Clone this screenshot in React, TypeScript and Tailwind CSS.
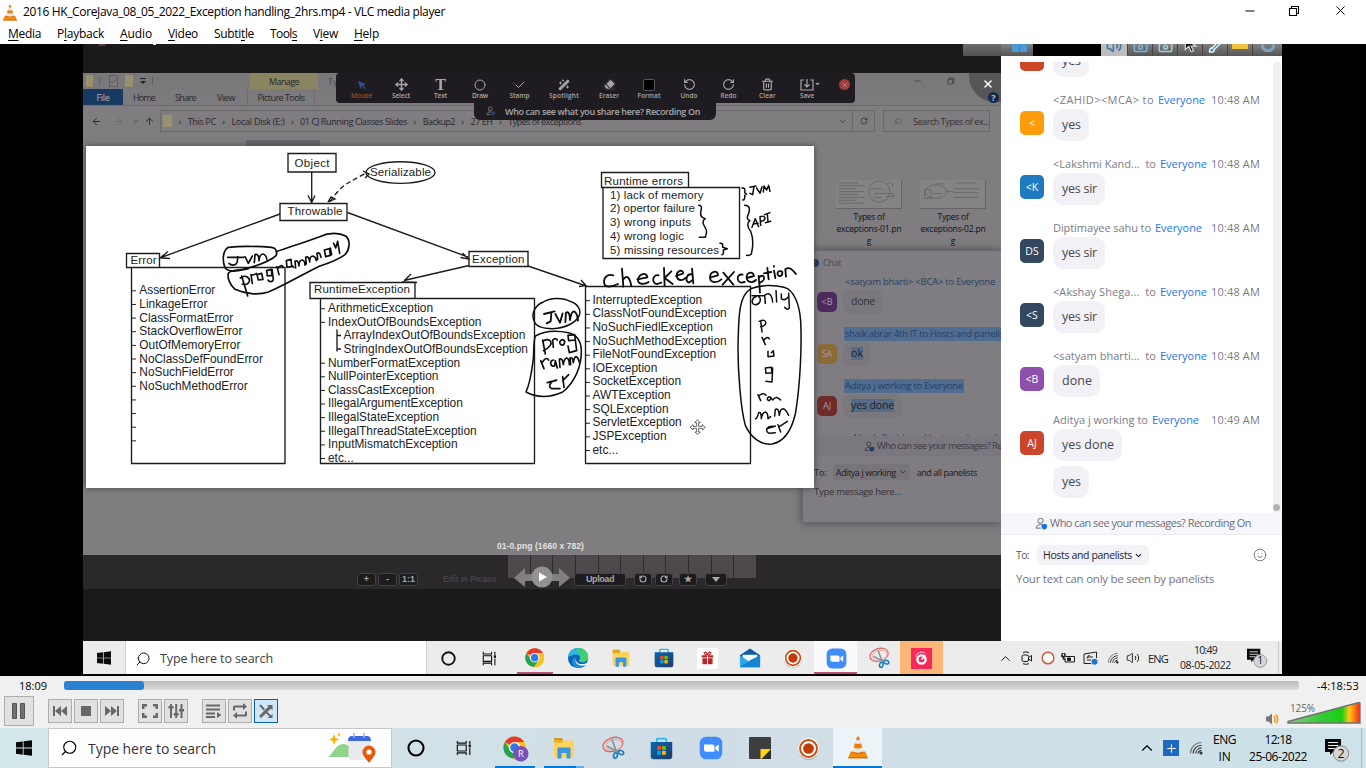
import React, { useLayoutEffect, useRef, useState } from "react";
import {
  Brush, Check, ChevronDown, ChevronUp, Circle, ArrowLeft, ArrowRight, ArrowUp, Eraser, Minus, Move,
  Plus, RotateCcw, RotateCw, Search, Smile, Trash2, Volume2, WandSparkles, X, Camera,
} from "lucide-react";

/* A single-line label whose letter spacing is adjusted so that it fills its slot. */
function Fit({ w, className = "", children }: { w: number; className?: string; children: React.ReactNode }) {
  const inner = useRef<HTMLSpanElement>(null);
  const [spacing, setSpacing] = useState(0);
  useLayoutEffect(() => {
    const el = inner.current;
    if (!el) return;
    el.style.letterSpacing = "0px";
    const count = (el.textContent || "").length || 1;
    const next = (w - el.getBoundingClientRect().width) / count;
    el.style.letterSpacing = next + "px";
    setSpacing(next);
  }, [w]);
  return (
    <span className={"inline-block shrink-0 whitespace-nowrap " + className} style={{ width: w }}>
      <span ref={inner} className="inline-block" style={{ letterSpacing: spacing }}>{children}</span>
    </span>
  );
}

/* ---------- icons ---------- */

function Cone({ className = "" }: { className?: string }) {
  return (
    <svg viewBox="0 0 24 26" className={className}>
      <path d="M4 18h16l2.500 6.500h-21z" fill="#f28a0c" />
      <path d="M1.500 24h21v1.500h-21z" fill="#c96c05" />
      <path d="M11 1.500q1-1 2 0L18.500 19q-6.500 3.500-13 0z" fill="#e6e6e6" />
      <path d="M10.900 2q1.100-1.600 2.200 0l1 3q-2 1-4.200 0z" fill="#f07f0a" />
      <path d="M8.700 9q3.300 1.600 6.600 0l1.400 4.500q-4.700 2-9.400 0z" fill="#f07f0a" />
      <path d="M5.900 18q6 2.500 12.200 0l.5 1.500q-6.500 3-13.200 0z" fill="#e07407" />
    </svg>
  );
}

function Restore({ className = "" }: { className?: string }) {
  return (
    <svg viewBox="0 0 12 12" className={className} fill="none" stroke="currentColor" strokeWidth="1.100">
      <path d="M1.500 3.500h7v7h-7zM3.500 3.500v-2h7v7h-2" />
    </svg>
  );
}

function Windows({ className = "" }: { className?: string }) {
  return (
    <svg viewBox="0 0 16 16" className={className} fill="#0a0a0a">
      <path d="M0 2.300 6.800 1.400v6.200H0zM7.600 1.300 16 .2v7.400H7.600zM0 8.400h6.800v6.300L0 13.700zM7.600 8.400H16v7.400l-8.400-1.100z" />
    </svg>
  );
}

function TaskView({ className = "" }: { className?: string }) {
  return (
    <svg viewBox="0 0 18 18" className={className} fill="none" stroke="#111" strokeWidth="1.300">
      <path d="M1.500 1v2.500h10V1M1.500 17v-2.500h10V17M1.500 5.600h10v6.800h-10zM15.500 1v4M15.500 9v8" />
      <path d="M14.200 5.200h2.600v3h-2.600z" fill="#111" stroke="none" />
    </svg>
  );
}

function Chrome({ badge = false, className = "" }: { badge?: boolean; className?: string }) {
  return (
    <svg viewBox="0 0 28 28" className={className}>
      <circle cx="13" cy="13" r="11.500" fill="#fbc116" />
      <path d="M13 13 3.050 7.200A11.500 11.500 0 0 1 22.960 7.250L13 7.250z" fill="#e33b2e" />
      <path d="M3.050 7.200A11.500 11.500 0 0 0 12.200 24.470L18 15.900 8.500 16z" fill="#23a455" />
      <path d="M13 7.200h9.960A11.500 11.500 0 0 1 12.200 24.500L18 15.900z" fill="#fbc116" />
      <circle cx="13" cy="13" r="5.800" fill="#fff" />
      <circle cx="13" cy="13" r="4.500" fill="#3077e8" />
      {badge && <circle cx="19.500" cy="19.500" r="8" fill="#7a50bc" />}
      {badge && (
        <text x="19.500" y="23" textAnchor="middle" fontSize="9.500" fill="#fff" fontFamily="Open Sans, sans-serif">R</text>
      )}
    </svg>
  );
}

function Edge({ className = "" }: { className?: string }) {
  return (
    <svg viewBox="0 0 24 24" className={className}>
      <circle cx="12" cy="12" r="11" fill="#0c63b8" />
      <path d="M1.200 11C2 4 7.500 1 12 1c6 0 11 4.500 11 9.500 0 4-3 6-6.500 6-2.500 0-4-1-3-2.200 1.800-2.200.4-6-3.500-6-4 0-7.500 2.500-8.800 2.700z" fill="#2cb7dc" />
      <path d="M13 1c6 .3 10 4.700 10 9.500 0 4-3 6-6.500 6-2.500 0-4-1-3-2.200C16 11 15.500 6 9.500 5z" fill="#43cd75" />
      <path d="M8.600 11c-1.500 6 3 10 7 10 2 0 4-.6 5.400-1.600C18.500 23 12 24 8 21c-4-3-2.500-8 .6-10z" fill="#1a8ee0" />
      <path d="M10 10.500c-2 3.500 1 8 6 8 2.500 0 4.500-.6 5.700-1.400l-1 2.400c-3 1.500-9 1.500-11-2.500-1.200-2.500-.7-5 .3-6.500z" fill="#e8f3f5" />
    </svg>
  );
}

function Folder({ className = "" }: { className?: string }) {
  return (
    <svg viewBox="0 0 24 24" className={className}>
      <path d="M2 2h8l1.500 3H2z" fill="#d99a12" />
      <path d="M2 4.500h20v17H2z" fill="#fbd35f" />
      <path d="M2 4.500h9.500L10 6.500H2z" fill="#e6ae2b" />
      <path d="M5.500 12.500q0-1 1-1h11q1 0 1 1v10h-4V17h-5v5.500h-4z" fill="#3b97dd" />
    </svg>
  );
}

function Store({ className = "" }: { className?: string }) {
  return (
    <svg viewBox="0 0 24 24" className={className}>
      <defs>
        <linearGradient id="bag" x1="0" y1="0" x2="1" y2="1">
          <stop offset="0" stopColor="#0569b4" /><stop offset="1" stopColor="#233a63" />
        </linearGradient>
      </defs>
      <path d="M7 6V2.500q0-.8.800-.8h8.400q.8 0 .8.800V6" fill="none" stroke="#27b7ee" strokeWidth="1.600" />
      <path d="M.8 5.200h22.400v15q0 3-3 3H3.800q-3 0-3-3z" fill="url(#bag)" />
      <path d="M7.500 9.500h4v4h-4z" fill="#f25022" /><path d="M12.500 9.500h4v4h-4z" fill="#7fba00" />
      <path d="M7.500 14.500h4v4h-4z" fill="#00a4ef" /><path d="M12.500 14.500h4v4h-4z" fill="#ffb900" />
    </svg>
  );
}

function Gift({ className = "" }: { className?: string }) {
  return (
    <svg viewBox="0 0 22 22" className={className}>
      <path d="M0 0h22v22H0z" fill="#fff" />
      <path d="M5 7.500h5.500V10H5zM11.500 7.500H17V10h-5.500zM5.700 10.800h4.800V17H5.700zM11.500 10.800h4.800V17h-4.800z" fill="#b8262a" />
      <path d="M11 7.300C7.500 7.500 6.500 4.600 8.300 4.400 9.800 4.300 11 6 11 7.300c0-1.300 1.200-3 2.700-2.900 1.800.2.800 3.100-2.700 2.900z" fill="none" stroke="#b8262a" strokeWidth="1.200" />
    </svg>
  );
}

function Mail({ className = "" }: { className?: string }) {
  return (
    <svg viewBox="0 0 24 24" className={className}>
      <path d="M1 9 12 1.500 23 9v4H1z" fill="#0f5ba8" />
      <path d="M4 8.500h16v8H4z" fill="#f5fbff" />
      <path d="M1 9l11 7.500L23 9v13H1z" fill="#2da6ea" />
      <path d="M1 22 13 14l10-5v13z" fill="#1583d2" />
    </svg>
  );
}

function Recorder({ className = "" }: { className?: string }) {
  return (
    <svg viewBox="0 0 24 24" className={className}>
      <circle cx="12" cy="12.800" r="11" fill="#9a9a9a" />
      <circle cx="12" cy="12" r="11" fill="#fff" />
      <circle cx="12" cy="12" r="8.800" fill="#fff" stroke="#cf4a12" strokeWidth="2" />
      <circle cx="12" cy="12" r="5.600" fill="#c63a08" />
    </svg>
  );
}

function ZoomApp({ className = "" }: { className?: string }) {
  return (
    <svg viewBox="0 0 24 24" className={className}>
      <rect x=".7" y=".7" width="22.600" height="22.600" rx="6.500" fill="#3f8cfb" />
      <path d="M5 8.500h8.500q2 0 2 2v5.200H7q-2 0-2-2zM16.500 10.800l3.200-2.300v7.200l-3.200-2.300z" fill="#fff" />
    </svg>
  );
}

function Snip({ className = "" }: { className?: string }) {
  return (
    <svg viewBox="0 0 24 24" className={className} fill="none">
      <ellipse cx="12" cy="8.500" rx="10.300" ry="6.800" stroke="#e2605e" strokeWidth="1.300" transform="rotate(-18 12 8.500)" />
      <ellipse cx="13" cy="9" rx="8" ry="5.500" stroke="#eba3a1" transform="rotate(-10 13 9)" />
      <path d="m6 10 11 6M11 3.500l4.500 12.500" stroke="#8a9298" strokeWidth="1.700" />
      <ellipse cx="14.500" cy="19.500" rx="1.900" ry="2.800" stroke="#1c7cba" strokeWidth="1.700" transform="rotate(15 14.500 19.500)" />
      <ellipse cx="20" cy="16.500" rx="2.700" ry="1.900" stroke="#1c7cba" strokeWidth="1.700" transform="rotate(20 20 16.500)" />
    </svg>
  );
}

function StickyNote({ className = "" }: { className?: string }) {
  return (
    <svg viewBox="0 0 24 24" className={className}>
      <path d="M1 2q0-1 1-1h20q1 0 1 1v20q0 1-1 1H2q-1 0-1-1z" fill="#3e3e3e" />
      <path d="M12.500 13H23L13.500 23h-1z" fill="#ffd60a" />
      <path d="M23 13.500V23h-9z" fill="#2f2f2f" />
    </svg>
  );
}

function Dial({ className = "" }: { className?: string }) {
  return (
    <svg viewBox="0 0 22 22" className={className}>
      <path d="M0 0h22v22H0z" fill="#f8285c" />
      <circle cx="11" cy="12" r="4.300" fill="none" stroke="#fff" strokeWidth="2.500" />
      <path d="m11 12 4-4.500" stroke="#fff" strokeWidth="1.800" />
      <path d="M5 9a6.500 6.500 0 0 1 9.500-3.700" fill="none" stroke="#fff" strokeWidth="1.300" strokeDasharray="1.200 1" />
    </svg>
  );
}

function Wifi({ className = "" }: { className?: string }) {
  return (
    <svg viewBox="0 0 14 14" className={className} fill="none" stroke="#333" strokeWidth="1.100">
      <path d="M1.500 12.500A11 11 0 0 1 12.500 1.500" stroke="#777" />
      <path d="M4 12.500A8.500 8.500 0 0 1 12.500 4.300M6.700 12.500a6 6 0 0 1 5.800-5.600M9 12.500a3.500 3.500 0 0 1 3.500-3" />
      <circle cx="12" cy="12" r="1" fill="#222" />
    </svg>
  );
}

function Notifications({ count, className = "" }: { count: number; className?: string }) {
  return (
    <svg viewBox="0 0 26 24" className={className}>
      <path d="M1 1h16v13H9l-3 3v-3H1z" fill="#0a0a0a" />
      <path d="M4 4.500h10M4 7.500h10M4 10.500h7" stroke="#eee" />
      <circle cx="17" cy="15.500" r="7.700" fill="#d6d6d6" stroke="#888" />
      <text x="17" y="19.800" textAnchor="middle" fontSize="12.500" fill="#111" fontFamily="Open Sans, sans-serif">{count}</text>
    </svg>
  );
}

function PersonShield({ className = "", line = "#85858f", fill = "#0e72ed" }: { className?: string; line?: string; fill?: string }) {
  return (
    <svg viewBox="0 0 14 14" className={"shrink-0 " + className} fill="none">
      <circle cx="6" cy="4" r="2.700" stroke={line} strokeWidth="1.200" />
      <path d="M7 8.200C3.500 7.800 1.500 9.500 1.300 12h5" stroke={line} strokeWidth="1.200" />
      <path d="M10 7.300 13 8.300v2.200q0 2-3 3.300-3-1.300-3-3.300V8.300z" fill={fill} />
    </svg>
  );
}

function Travel({ className = "" }: { className?: string }) {
  return (
    <svg viewBox="0 0 50 32" className={className}>
      <path d="M0 25C5 22 8 12 15 12s9 6 12 13z" fill="#8fd58c" />
      <path d="m6 2 1.500 4L11 7.500 7.500 9 6 13 4.500 9 1 7.500 4.500 6z" fill="#f7b500" />
      <circle cx="11" cy="2.500" r="1.200" fill="#f7b500" />
      <rect x="20.500" y="6" width="22" height="22" rx="3" fill="#e9e9ee" />
      <path d="M20 9q0-5 4-5h15q4 0 4 5z" fill="#4168d9" />
      <path d="M26 1v5M36 1v5" stroke="#9eb3ea" strokeWidth="1.500" />
      <path d="M41 31c-3-4.500-6.500-7-6.500-11a6.500 6.500 0 0 1 13 0c0 4-3.500 6.500-6.500 11z" fill="#e8590c" />
      <circle cx="41" cy="20" r="2.600" fill="#fff" />
    </svg>
  );
}

/* ---------- window header ---------- */

const menus: [string, string, string, number][] = [
  ["", "M", "edia", 33], ["P", "l", "ayback", 47], ["", "A", "udio", 32], ["", "V", "ideo", 30],
  ["Subti", "t", "le", 40], ["Tool", "s", "", 27], ["V", "i", "ew", 25], ["", "H", "elp", 25],
];

function Header() {
  return (
    <header className="h-[44px] bg-white text-[12px] text-black">
      <div className="flex h-6 items-center pl-[2px]">
        <Cone className="h-[17px] w-4" />
        <Fit w={422} className="ml-[5px]">2016 HK_CoreJava_08_05_2022_Exception handling_2hrs.mp4 - VLC media player</Fit>
        <div className="ml-auto flex items-center pr-[18px] pb-[3px]">
          <Minus size={14} strokeWidth={1.700} className="mr-[31px]" />
          <Restore className="mr-[33px] size-3" />
          <X size={15} strokeWidth={1.600} />
        </div>
      </div>
      <nav className="flex h-5 items-center gap-4 pl-2">
        {menus.map(([a, u, b, w]) => (
          <Fit key={u + b} w={w}>{a}<span className="underline underline-offset-2">{u}</span>{b}</Fit>
        ))}
      </nav>
    </header>
  );
}

/* ---------- shared desktop ---------- */

function Explorer() {
  return (
    <div className="relative h-[482px] overflow-hidden bg-[#7f7d80] text-[9px] text-[#29272b]">
      <div className="flex h-4 items-center bg-[#7a787b]">
        <span className="ml-[3px] h-3 w-[7px] bg-[#99906f]" />
        <span className="ml-[6px] h-2 w-px bg-[#5f5d60]" />
        <span className="ml-[9px] flex h-3 w-[9px] items-center justify-center border border-[#5f5d60]"><Check size={7} className="text-[#6d3439]" /></span>
        <span className="ml-[7px] h-3 w-[8px] bg-[#99906f]" />
        <svg viewBox="0 0 6 6" className="ml-[7px] size-[6px]"><path d="M0 0h6v1H0zM0 3h6L3 6z" fill="#222" /></svg>
        <span className="ml-[6px] h-2 w-px bg-[#5f5d60]" />
        <span className="ml-[97px] flex h-4 w-[68px] items-center justify-center bg-[#8b8661]"><Fit w={30}>Manage</Fit></span>
        <span className="ml-[10px] text-[#514f52]">Typ</span>
        <div className="ml-auto flex items-center gap-[25px] pr-[12px] text-[#39373a]"><Minus size={8} /><Restore className="size-2" /><X size={9} /></div>
      </div>
      <div className="flex h-[17px] items-center border-b border-[#6d6b6e] bg-[#7c7a7d]">
        <span className="flex h-full w-10 items-center justify-center bg-[#183a62] text-[#a9b4c2]"><Fit w={13}>File</Fit></span>
        <Fit w={22} className="ml-[10px]">Home</Fit>
        <Fit w={21} className="ml-5">Share</Fit>
        <Fit w={18} className="ml-[21px]">View</Fit>
        <span className="ml-3 flex h-full w-[68px] items-center justify-center border-x border-[#6d6b6e]"><Fit w={47}>Picture Tools</Fit></span>
      </div>
      <div className="flex h-[30px] items-center">
        <ArrowLeft size={11} className="ml-2" />
        <ArrowRight size={11} className="ml-[11px] text-[#69676a]" />
        <ChevronDown size={7} className="ml-2" />
        <ArrowUp size={11} className="ml-[5px]" />
        <div className="ml-[5px] flex h-[22px] w-[693px] items-center border border-[#6a686b] pl-[2px]">
          <span className="h-3 w-[9px] bg-[#99906f]" />
          <span className="mx-[6.500px]">›</span><Fit w={28}>This PC</Fit>
          <span className="mx-[6.500px]">›</span><Fit w={53}>Local Disk (E:)</Fit>
          <span className="mx-[6.500px]">›</span><Fit w={107}>01 CJ Running Classes Slides</Fit>
          <span className="mx-[6.500px]">›</span><Fit w={32}>Backup2</Fit>
          <span className="mx-[6.500px]">›</span><Fit w={22}>27 EH</Fit>
          <span className="mx-[6.500px]">›</span><Fit w={73}>Types of exceptions</Fit>
          <ChevronDown size={9} className="mr-[5px] ml-auto" />
        </div>
        <div className="-ml-px flex h-[22px] w-[23px] items-center justify-center border border-[#6a686b]"><RotateCw size={8} /></div>
        <div className="ml-2 flex h-[22px] w-[107px] items-center border border-[#6a686b]">
          <Search size={9} strokeWidth={1.400} className="mr-[11px] ml-[10px] -scale-x-100 text-[#454346]" />
          <Fit w={76} className="text-[#353336]">Search Types of ex...</Fit>
        </div>
      </div>
      <div className="mx-[163px] mt-[4px] h-3 w-[74px] bg-[#68666a]" />
      <div className="-mt-px ml-[751px] flex gap-[14px] pt-[29px] text-center text-[8.500px] leading-[12px] text-[#121013]">
        {["01", "02"].map((n) => (
          <div key={n} className="flex w-[70px] flex-col items-center">
            <svg viewBox="0 0 66 29" className="mb-[2px] h-[29px] w-[66px] border-r border-b border-[#656366] bg-[#858386]" fill="none" stroke="#626063" strokeWidth=".8">
              {n === "01" ? (
                <>
                  <path d="M2 3h20M2 6h27M2 9h18M2 12h26M2 15h20M2 18h27M2 21h18M2 24h27" />
                  <circle cx="44" cy="12" r="11" /><path d="M35 9h13M39 14h12M38 18h9M53 3h3M58 2v5M52 14h7v3h-7" />
                </>
              ) : (
                <>
                  <ellipse cx="16" cy="12" rx="11" ry="7" /><path d="M4 10h7v9H4zM13 14h9M26 12h8M15 4h9M36 3h22M34 9h26M34 13h26M34 18h26" />
                </>
              )}
            </svg>
            <Fit w={31}>Types of</Fit>
            <Fit w={65}>{"exceptions-" + n + ".pn"}</Fit>
            <span>g</span>
          </div>
        ))}
      </div>
      <ChatWindow />
    </div>
  );
}

function DimMessage({ tag, color, from, w, text, tw, selected }: { tag: string; color: string; from: string; w: number; text: string; tw: number; selected?: boolean }) {
  return (
    <div className="h-[52px]">
      <div className="flex h-[15px] items-center pl-[41px]">
        <span className={"flex h-[14px] items-center " + (selected ? "bg-[#506d90] px-px text-[#233f68]" : "px-px text-[#2b3f5f]")}><Fit w={w}>{from}</Fit></span>
      </div>
      <div className="flex h-[25px] items-center pl-[14px] text-[10.500px]">
        <span className={"flex size-5 items-center justify-center rounded-[5px] text-[9px] text-[#a39da5] " + color}>{tag}</span>
        <span className="ml-[6px] flex h-6 items-center rounded-[7px] bg-[#7a787c] px-2">
          <span className={selected ? "bg-[#566b87] py-px text-[#151f2e]" : ""}><Fit w={tw}>{text}</Fit></span>
        </span>
      </div>
    </div>
  );
}

function ChatWindow() {
  return (
    <div className="absolute top-[177px] left-[719px] flex h-[273px] w-[199px] flex-col overflow-hidden border border-r-0 border-[#6b696d] bg-[#7f7d82] text-[9.500px] text-[#323034] shadow-[0_0_8px_#4a484c]">
      <div className="flex h-[23px] shrink-0 items-center pl-[8px]">
        <span className="size-2 rounded-full bg-[#1c3559]" /><Fit w={18} className="ml-[4px] text-[#4d4b50]">Chat</Fit>
      </div>
      <div className="h-[162px] shrink-0 overflow-hidden">
        <DimMessage tag="<B" color="bg-[#4c2a5d]" from="<satyam bharti> <BCA> to Everyone" w={150} text="done" tw={24} />
        <DimMessage tag="SA" color="bg-[#8a6a35]" from="shaik abrar 4th IT to Hosts and panelists" w={166} text="ok" tw={12} selected />
        <DimMessage tag="AJ" color="bg-[#6f2b2a]" from="Aditya j working to Everyone" w={118} text="yes done" tw={43} selected />
        <Fit w={160} className="mt-[3px] ml-[49px] text-[#2f4a70]">Akash Reddy to Hosts and panelists</Fit>
      </div>
      <div className="flex h-5 shrink-0 items-center bg-[#7a787e] pl-[61px]"><PersonShield className="mr-[2px] size-[11px]" line="#3e3c42" fill="#1d3c6b" /><Fit w={168} className="text-[#3b3940]">Who can see your messages? Recording On</Fit></div>
      <div className="mt-[8px] flex h-4 shrink-0 items-center text-[9px] text-[#1b191d]">
        <span className="ml-[11px]">To:</span>
        <span className="ml-[6px] flex h-4 items-center rounded bg-[#77757a] px-[3px]"><Fit w={60}>Aditya j working</Fit><ChevronDown size={8} className="ml-[3px]" /></span>
        <Fit w={60} className="ml-[7px]">and all panelists</Fit>
      </div>
      <Fit w={87} className="mt-[7px] ml-[11px]">Type message here...</Fit>
    </div>
  );
}

function Tool({ width, label, lw, accent, children }: { width: string; label: string; lw: number; accent?: boolean; children: React.ReactNode }) {
  return (
    <div className={"flex flex-col items-center pt-1 " + width + (accent ? " text-[#8d5720]" : "")}>
      <span className="flex h-[15px] items-center">{children}</span>
      <Fit w={lw} className="text-[6.500px] leading-[8px] font-semibold">{label}</Fit>
    </div>
  );
}

function AnnotationBar() {
  return (
    <div className="absolute top-[29px] left-[253px] w-[519px] font-['Open_Sans',sans-serif] text-[#a9a7aa]">
      <div className="flex h-[30px] rounded bg-[#1e1c20] pl-[6px]">
        <Tool width="w-[39px]" label="Mouse" lw={21} accent>
          <svg viewBox="0 0 12 12" className="size-[10px]"><path d="m1 1 10 4-4 1.500L11 10l-1 1-4-4-1.500 4z" fill="#344f91" /></svg>
        </Tool>
        <Tool width="w-[40px]" label="Select" lw={18}><Move size={13} strokeWidth={2.500} /></Tool>
        <Tool width="w-[39px]" label="Text" lw={13}><span className="font-['Liberation_Serif',serif] text-[16px] font-bold">T</span></Tool>
        <Tool width="w-[40px]" label="Draw" lw={16}><Circle size={12} /></Tool>
        <Tool width="w-[39px]" label="Stamp" lw={20}><Check size={12} /></Tool>
        <Tool width="w-[50px]" label="Spotlight" lw={30}><WandSparkles size={12} className="fill-current" /></Tool>
        <Tool width="w-[40px]" label="Eraser" lw={20}><Eraser size={13} className="fill-current stroke-[#39373b]" /></Tool>
        <Tool width="w-[40px]" label="Format" lw={23}><span className="size-[12px] rounded-[2px] border border-[#58565a] bg-black" /></Tool>
        <Tool width="w-[40px]" label="Undo" lw={17}><RotateCcw size={13} /></Tool>
        <Tool width="w-[39px]" label="Redo" lw={16}><RotateCw size={13} /></Tool>
        <Tool width="w-[39px]" label="Clear" lw={17}><Trash2 size={13} strokeWidth={2.200} /></Tool>
        <Tool width="w-[40px]" label="Save" lw={14}>
          <svg viewBox="0 0 20 12" className="h-3 w-5 translate-x-[3px]" fill="none" stroke="currentColor" strokeWidth="1.200"><path d="M4 1H1v10h12V1h-3M7 0v8M4.500 5.500 7 8l2.500-2.500M16 4l1.500 1.500L19 4" /></svg>
        </Tool>
        <span className="mt-[6px] ml-[12px] flex size-[11px] items-center justify-center rounded-full bg-[#a13b3c]"><X size={8} /></span>
      </div>
      <div className="mx-[138px] -mt-px flex h-[18px] w-[242px] items-center rounded-b-md bg-[#1e1c20] pl-[12px]">
        <PersonShield className="mr-[9px] size-[10px]" line="#848287" fill="#273d6c" />
        <Fit w={195} className="text-[9px] font-semibold">Who can see what you share here? Recording On</Fit>
      </div>
    </div>
  );
}

/* ---------- slide ---------- */

const errors = ["AssertionError", "LinkageError", "ClassFormatError", "StackOverflowError", "OutOfMemoryError", "NoClassDefFoundError", "NoSuchFieldError", "NoSuchMethodError", "", "", "", ""];
const runtime = ["ArithmeticException", "IndexOutOfBoundsException", ">ArrayIndexOutOfBoundsException", ">StringIndexOutOfBoundsException", "NumberFormatException", "NullPointerException", "ClassCastException", "IllegalArgumentException", "IllegalStateException", "IllegalThreadStateException", "InputMismatchException", "etc..."];
const checked = ["InterruptedException", "ClassNotFoundException", "NoSuchFiedlException", "NoSuchMethodException", "FileNotFoundException", "IOException", "SocketException", "AWTException", "SQLException", "ServletException", "JSPException", "etc..."];
const causes: [string, number, number][] = [["1) lack of memory", 198.500, 93.500], ["2) opertor failure", 212.300, 85], ["3) wrong inputs", 225.900, 81], ["4) wrong logic", 239.700, 74], ["5) missing resources", 253.700, 109]];

function Slide() {
  return (
    <svg viewBox="86 146 728 342" className="absolute top-[102px] left-[3px] h-[342px] w-[728px] bg-white shadow-[0_0_6px_#444]" fontFamily="Liberation Sans, sans-serif" fontSize="11.500" fill="#222">
      <g fill="none" stroke="#1c1c1c" strokeWidth="1.350">
        <path d="M288 153.500h48v18.500h-48zM280 203.500h67v17h-67zM126.500 253.500h33v14h-33zM131.500 267.500h153.500v196H131.500zM310 282.500h105v16H310zM320.500 298.500h214v165h-214zM469 251.500h59v15h-59zM585.500 286.500h165v177h-165zM601.500 172.500h87v15h-87zM603 187.500h136.500v71H603z" />
        <path d="M311.700 172v30M308 195.500l3.700 7 3.200-7M280 214l-119 43.500M168 251.500l-8 6.500 10 .5M347.500 212.500 468 257M460.500 257.500l8 1.500-6-6M469 265.500l-65 15M411 274l-8 8 14 .5M528 266l57 19.500M579 286.500l7-1-5-5.500" />
        <ellipse cx="400.500" cy="172.500" rx="34.500" ry="10.800" />
        <path d="M330 201.500q10-14 18-18.500t18-10" strokeDasharray="5 3" />
        <path d="m363 171 6 3-4 4M328 202l3-5 4 2-7 3" />
        <path d="M337 329.500v22M337 335.500h4M337 349h4" />
      </g>
      <text x="294.500" y="166.500" textLength="35">Object</text>
      <text x="287.500" y="215" textLength="55">Throwable</text>
      <text x="370" y="176" textLength="61">Serializable</text>
      <text x="130.500" y="263.700" textLength="26">Error</text>
      <text x="314" y="293.300" textLength="96">RuntimeException</text>
      <text x="472" y="262.700" textLength="52.500">Exception</text>
      <text x="604" y="184.500" textLength="79">Runtime errors</text>
      <g fontSize="11.900">
        {errors.map((t, i) => (
          <g key={i}>
            <path d={`M132 ${290.800 + i * 13.640}h4`} stroke="#222" />
            <text x="139.300" y={294.300 + i * 13.640}>{t}</text>
          </g>
        ))}
        {runtime.map((t, i) => (
          <g key={i}>
            {t[0] !== ">" && <path d={`M321 ${308.700 + i * 13.620}h4`} stroke="#222" />}
            <text x={t[0] === ">" ? 343.500 : 328} y={312.100 + i * 13.620}>{t.replace(">", "")}</text>
          </g>
        ))}
        {checked.map((t, i) => (
          <g key={i}>
            <path d={`M586 ${300.700 + i * 13.620}h4`} stroke="#222" />
            <text x="592.500" y={303.700 + i * 13.620}>{t}</text>
          </g>
        ))}
      </g>
      {causes.map(([t, y, w]) => <text key={t} x="610" y={y} textLength={w}>{t}</text>)}

      {/* pen strokes, left half */}
      <g transform="translate(85 140) scale(.33333)" fill="none" stroke="#0d0d0d" strokeWidth="5" strokeLinecap="round" strokeLinejoin="round">
        <path d="M430 322c40-5 90-3 130 0 14 2 16 12 14 24-20 20-70 35-110 45-20 4-38 2-44-8-8-20-8-50 10-61" />
        <path d="M574 335c40-14 90-30 130-45 30-14 60-12 78-2 16 14 12 40-2 56-24 18-50 26-80 36-60 30-100 54-150 76-30 10-70 6-100-8-14-12-24-34-20-48 10-14 40-8 60-14" />
        <path d="M428 352h48M458 350c0 16-2 22-8 24s-14 0-18-4M480 350l10 20 12-22M508 368l2-24q12-4 12 18 2-20 12-20 10 2 12 18" />
        <path d="M470 408l18 60M466 414c14-12 32 0 26 12-4 8-14 8-20 6M502 430l-4-26c4 4 10 0 16-4M516 404l14-4 4 18-14 2zM545 392l14-4 2 18-14 2zM561 388l4 30c-2 10-14 8-16 2M576 380l6 24M578 386q10-14 16-6" />
        <path d="M604 362l14-4 2 22-14 2zM620 376l6 6M632 384l-2-20q10-6 12 14 0-18 10-18 8 2 8 16M664 372l-2-20q10-6 12 14 0-18 10-18 8 2 10 14M698 358l-2-18q8-6 12 12M718 330l16-4 2 20-14 4zM736 324l4 20M746 310l6 14 6-20M758 304l6 36" />
      </g>

      {/* pen strokes, right half */}
      <g transform="translate(440 140) scale(.33333)" fill="none" stroke="#0d0d0d" strokeWidth="4.500" strokeLinecap="round" strokeLinejoin="round">
        <path d="M906 144q12-2 8 14l6 4-6 4q2 14-6 14" />
        <path d="M930 142l18-4M942 140l-4 24-8-4M950 144l10 16 6-20M970 156l2-18 8 12 6-14 4 18" />
        <path d="M914 196c16 0 16 12 12 24-10 20 2 20 4 22-8 4-10 18 2 32 8 20 8 44 2 68q-6 6-14 4" />
        <path d="M936 262l10-26 10 24M940 252l14-2M962 256l-2-26c18-6 20 10 4 14M974 224l16-6M982 222l2 22M976 248l16-4" />
        <path d="M776 196c12 0 8 10 6 22-2 12 6 16 14 18-10 6-8 14-2 24 8 12 6 20 2 32h-18M840 310q10-2 8 12l14 4-12 4q2 14-4 14" />
        <g strokeWidth="5.500">
          <path d="M520 406c-14-4-28 2-28 20s22 16 42 6M546 386l4 54M550 418c12-16 20-2 24 20M592 418l30-6c-2-18-26-10-28 8 0 14 20 14 32 6M656 406c-20-4-22 26-4 26l12-4M672 384l2 54M694 394l-20 20 24 18M708 408l22-8c-2-14-20-8-20 8 2 14 18 16 26 6M758 404c-18-6-24 18-12 24l12-8M756 386l4 44" />
          <path d="M812 412l22-6c0-18-24-12-24 6s22 18 34 6M850 398l30 36M882 396l-34 38M908 404c-20-4-18 22-4 24l10-2M920 414l22-6c-2-16-22-12-22 4s18 18 28 8M956 408l4 50M956 414c14-18 26 4 4 14M982 384l4 34M972 400l22-4M1002 392l4 22M1002 378v2M1022 394c-12-4-12 16-2 14s8-18 2-14M1038 410l-2-22c14-10 22 2 32 14" />
        </g>
        <path d="M932 446c30-12 70-12 100-4 30 8 46 50 50 100 4 80-2 200-16 280-12 50-36 84-70 90-34 4-64-20-80-56-14-50-22-160-22-230 2-90 0-160 40-180 10-4 30-8 36-8" />
        <path d="M936 467h34M948 470c-14 4-16 24-2 24s20-18 10-24M976 490l-2-24c14-12 22 0 24 20M1008 452l2 34M1024 462v14q10 8 20-4M1046 460l2 44q-6 8-14-2" />
        <path d="M962 542l4 34M958 544c24-12 26 14 4 16M966 592l10 22M972 600q8-12 16-4M984 634v16l18-2-2-16-6 6M976 684l18-2 2 16-18 2zM998 684l-2 42-18-2M954 764l8 18M956 768q14-12 22-2M992 772c-10-6-14 10-4 10l6-8c4 8 4 8 8 2 8-8 12-2 20 4M946 836q6 0 10-18 8-4 8 18 4-20 12-20 8 2 8 20l8-6M1004 828l2-20q10-6 12 18 2-20 12-20 8 2 16 20M980 866l26-8M1002 860c-20-6-30 14-14 20l18-2M1022 876l-8-22M1018 860l24-16" />
        <path d="M310 486c20-14 60-14 80-2 24 8 34 26 28 42-10 22-40 38-80 40-32 0-52-8-56-24-10-24 6-48 28-56" />
        <path d="M312 522l32-8M334 520l-2 24-12 6M346 522l14 26 8-28M376 546l2-28q12-6 12 22 4-26 12-26 10 4 12 28" strokeWidth="5.500" />
        <path d="M286 588c30-18 70-16 100-10 24 6 36 24 38 50 2 50-20 100-56 128-40 18-80 16-110 0 14-30 18-70 22-100 2-30 0-50 6-68" />
        <path d="M308 600l8 42M308 604c20-16 44 8 2 28M340 622l-2-22q8-8 14 0M362 602c-8 6 4 20 10 10s-4-18-10-10M384 586l20-2 2 16-20 2zM406 600l4 32-22 6-4-20M302 662l10 24M306 668q12-20 20-8M340 660c-12 2-10 22 4 18l2-16 6 22M360 682l-2-24q10-6 12 16 2-18 10-20 8 2 8 20M392 674l-2-20q8-4 10 14 2-16 8-18 6 2 10 16M322 728l28-8M348 722c-18 0-28 24-8 24h20M372 742l-4-32M368 722l18-18" strokeWidth="5" />
        <path d="M773 840l8 8h-5v11h11v-5l9 8-9 8v-5h-11v11h5l-8 8-8-8h5v-11h-11v5l-9-8 9-8v5h11v-11h-5z" stroke="#444" strokeWidth="2.500" fill="#fff" />
      </g>
    </svg>
  );
}

/* ---------- photo viewer controls ---------- */

function Key({ w, className = "", children }: { w: string; className?: string; children: React.ReactNode }) {
  return <span className={"flex h-[13px] shrink-0 items-center justify-center rounded-[3px] border border-[#434144] bg-[#1d1b1e] text-[9px] font-bold text-[#a9a7aa] " + w + " " + className}>{children}</span>;
}

function PhotoControls() {
  return (
    <div className="relative h-[34px] bg-[#2a282b]">
      <div className="absolute top-0 left-[425px] flex h-[23px] w-[248px] gap-px bg-[#2c2a2d]">
        {Array.from({ length: 11 }, (_, i) => <span key={i} className="flex-1 bg-[#4c484b]" />)}
      </div>
      <div className="relative flex h-full items-center pt-[14px] pl-[274px] font-['Liberation_Sans',sans-serif]">
        <Key w="w-[19px]">+</Key>
        <Key w="w-[19px]" className="ml-[2px]">-</Key>
        <Key w="w-[19px]" className="ml-[2px]">1:1</Key>
        <Fit w={53} className="ml-[25px] text-[8.500px] font-bold text-[#454346]">Edit in Picasa</Fit>
        <svg viewBox="0 0 56 22" className="-mt-[4px] ml-[18px] h-[22px] w-14 shrink-0">
          <path d="M0 12 11 2v6h34V2l11 10-11 9v-6H11v6z" fill="#817f82" />
          <circle cx="28" cy="11" r="10.500" fill="#939194" />
          <path d="m25 6.500 8 4.500-8 4.500z" fill="#fff" />
        </svg>
        <Key w="w-[52px]" className="ml-[4px]"><Fit w={28}>Upload</Fit></Key>
        <Key w="w-[18px]" className="ml-[8px]"><RotateCcw size={8} strokeWidth={3.500} /></Key>
        <Key w="w-[18px]" className="ml-[3px]"><RotateCw size={8} strokeWidth={3.500} /></Key>
        <Key w="w-[18px]" className="ml-[6px]">★</Key>
        <Key w="w-[22px]" className="ml-[8px]"><svg viewBox="0 0 8 5" className="h-[5px] w-2"><path d="M0 0h8L4 5z" fill="#aaa" /></svg></Key>
      </div>
    </div>
  );
}

function SharedScreen() {
  return (
    <div className="relative h-[597px] w-[918px] overflow-hidden bg-[#1a1a1a]">
      <div className="flex h-[29px] items-start">
        <span className="ml-[15px] h-[2px] w-2 rounded-b bg-[#5f3630]" />
        <span className="ml-[47px] h-px w-[3px] bg-white" />
        <span className="ml-auto h-3 w-[38px] bg-linear-to-b from-[#6d6d6d] to-[#505050]" />
      </div>
      <Explorer />
      <PhotoControls />
      <div className="absolute top-[29px] left-[886px] h-[29px] w-8 overflow-hidden rounded-bl-[26px] bg-[#575558]">
        <X size={12} strokeWidth={3} className="mt-[5px] ml-[13px] text-white" />
      </div>
      <span className="absolute top-[48px] left-[905px] flex size-[11px] items-center justify-center rounded-full bg-[#14294a] text-[9px] font-bold text-[#bdc5d3]">?</span>
      <AnnotationBar />
      <Slide />
      <Fit w={87} className="absolute top-[498px] left-[414px] font-['Liberation_Sans',sans-serif] text-[8.500px] font-bold text-[#e4e2e4]">01-0.png (1660 x 782)</Fit>
    </div>
  );
}

/* ---------- live chat ---------- */

type Msg = { tag: string; color: string; from: string; w: number; time: string; texts: [string, number][] };
const messages: Msg[] = [
  { tag: "", color: "bg-[#cf4527]", from: "Aditya j working to", w: 95, time: "10:48 AM", texts: [["yes", 19]] },
  { tag: "<", color: "bg-[#fe9c0c]", from: "<ZAHID><MCA> to", w: 101, time: "10:48 AM", texts: [["yes", 19]] },
  { tag: "<K", color: "bg-[#1f7abf]", from: "<Lakshmi Kand...\u00a0 to", w: 103, time: "10:48 AM", texts: [["yes sir", 35]] },
  { tag: "DS", color: "bg-[#33475f]", from: "Diptimayee sahu to", w: 98, time: "10:48 AM", texts: [["yes sir", 35]] },
  { tag: "<S", color: "bg-[#33475f]", from: "<Akshay Shega...\u00a0 to", w: 103, time: "10:48 AM", texts: [["yes sir", 35]] },
  { tag: "<B", color: "bg-[#8f4fad]", from: "<satyam bharti...\u00a0 to", w: 103, time: "10:48 AM", texts: [["done", 30]] },
  { tag: "AJ", color: "bg-[#cb452b]", from: "Aditya j working to", w: 95, time: "10:49 AM", texts: [["yes done", 52], ["yes", 19]] },
];

function LiveChat() {
  const slot = "flex w-[25px] justify-center border-l border-[#444]";
  return (
    <aside className="flex h-[597px] w-[281px] flex-col bg-white">
      <div className="flex h-3 overflow-hidden bg-linear-to-b from-[#808080] to-[#555]">
        <span className="flex w-8 justify-center gap-px pl-1"><i className="h-2 w-[7px] bg-[#4b9bd5]" /><i className="h-2 w-[7px] bg-[#4b9bd5]" /></span>
        <span className="w-[68px] bg-black" />
        <span className="flex w-[26px] justify-center bg-[#bdbdbd]"><Volume2 size={16} strokeWidth={2.500} className="-mt-[6px] text-[#477ba5]" /></span>
        <span className={slot}><Camera size={15} strokeWidth={2.500} className="-mt-[5px] text-[#79b6d8]" /></span>
        <span className={slot}><Camera size={15} strokeWidth={2.500} className="-mt-[5px] text-[#a5cadb]" /></span>
        <span className={slot}><svg viewBox="0 0 12 12" className="-mt-[6px] size-[14px]"><path d="M2 0v10l3-3 2 5 2-1-2-4h4z" fill="#111" stroke="#ddd" /></svg></span>
        <span className={slot}><Brush size={15} className="-mt-[5px] fill-[#358ec8] text-white" /></span>
        <span className={slot}><i className="h-[5px] w-4 bg-[#f0c13b]" /></span>
        <span className="flex w-[30px] justify-center border-l border-[#444]"><Circle size={14} strokeWidth={6} className="-mt-[6px] text-[#7d9fb6]" /></span>
      </div>
      <div className="mt-[6px] flex h-[451px]">
        <div className="flex-1 overflow-hidden pl-[19px]">
          <div className="-mt-[35px] flex flex-col">
            {messages.map((m, i) => (
              <div key={i} className="mb-[14px]">
                <div className="mb-[2px] flex h-4 items-center pl-[33px] text-[11px] text-[#7b7b88]">
                  <Fit w={m.w}>{m.from}</Fit>
                  <Fit w={47} className="ml-1 text-[#2478ec]">Everyone</Fit>
                  <Fit w={49} className="mr-[13px] ml-auto">{m.time}</Fit>
                </div>
                <div className="flex">
                  <span className={"mt-[2px] flex size-6 items-center justify-center rounded-[5px] text-[10.500px] text-white " + m.color}>{m.tag}</span>
                  <div className="ml-[9px] flex flex-col items-start gap-[5px]">
                    {m.texts.map(([t, w]) => (
                      <span key={t} className="flex h-8 items-center rounded-[10px] bg-[#f1f1f6] px-2 pt-px pl-[9px] text-[12.500px] text-[#48484f]"><Fit w={w}>{t}</Fit></span>
                    ))}
                  </div>
                </div>
              </div>
            ))}
          </div>
        </div>
        <div className="mr-px flex w-2 flex-col justify-end rounded-t bg-[#f1f1f5]"><span className="mb-[2px] h-[7px] w-[7px] rounded-full bg-[#b1b1b6]" /></div>
      </div>
      <div className="flex h-[22px] items-center border-b border-[#ececf2] bg-[#f7f7fb] pl-[34px]">
        <PersonShield className="mr-[2px] size-[13px]" />
        <Fit w={201} className="pb-[2px] text-[11px] text-[#6e6e7a]">Who can see your messages? Recording On</Fit>
      </div>
      <div className="mt-[10px] flex h-5 items-center pl-[15px] text-[#55555f]">
        <Fit w={13} className="text-[10.500px]">To:</Fit>
        <span className="ml-2 flex h-5 items-center rounded-[5px] bg-[#f2f2f7] pr-[6px] pl-[6px]">
          <Fit w={89} className="text-[10.500px] font-medium text-[#232333]">Hosts and panelists</Fit>
          <ChevronDown size={9} strokeWidth={3} className="ml-[2px] text-[#232333]" />
        </span>
        <Smile size={14} strokeWidth={1.700} className="mr-[15px] ml-auto text-[#77777f]" />
      </div>
      <Fit w={198} className="mt-[5px] ml-[15px] text-[11.500px] leading-[18px] text-[#747487]">Your text can only be seen by panelists</Fit>
    </aside>
  );
}

/* ---------- taskbars ---------- */

function InnerTaskbar() {
  const cell = "relative flex h-full w-[43px] shrink-0 items-center justify-center pt-px";
  return (
    <div className="flex h-[34px] w-[1199px] items-center border-b border-black bg-[#ececec] text-black">
      <span className="flex w-[42px] justify-center pt-px"><Windows className="size-[14px]" /></span>
      <div className="flex h-full w-[302px] items-center border-x border-[#cfcfcf] bg-white pt-[2px] pl-[9px]">
        <Search size={16} strokeWidth={1.400} className="-scale-x-100" />
        <Fit w={113} className="ml-[9px] pt-[2px] text-[12.500px] text-[#3c3c3c]">Type here to search</Fit>
      </div>
      <span className={cell}><Circle size={15} strokeWidth={3} className="text-[#111]" /></span>
      <span className={cell}><TaskView className="mr-1 size-[15px]" /></span>
      <span className={cell}><Chrome className="mt-px ml-px size-[23px]" /><i className="absolute bottom-0 h-[2px] w-9 bg-[#b4516f]" /></span>
      <span className={cell}><Edge className="size-[22px]" /></span>
      <span className={cell}><Folder className="size-5" /></span>
      <span className={cell}><Store className="size-5" /></span>
      <span className={cell}><Gift className="ml-px size-[21px]" /></span>
      <span className={cell}><Mail className="ml-px size-[22px]" /></span>
      <span className={cell}><Recorder className="ml-px size-5" /></span>
      <span className={cell + " bg-[#fafafa]"}><ZoomApp className="ml-px size-[21px]" /><i className="absolute bottom-0 h-[2px] w-full bg-[#b4516f]" /></span>
      <span className={cell}><Snip className="ml-px size-[22px]" /></span>
      <span className={cell + " bg-[#feb678]"}><Dial className="size-[21px]" /></span>
      <div className="ml-auto flex h-full items-center pt-px text-[#1a1a1a]">
        <ChevronUp size={15} strokeWidth={1.600} className="mr-[8px]" />
        <svg viewBox="0 0 12 14" className="mr-[8px] h-[14px] w-3" fill="none" stroke="currentColor"><rect x="1" y="4" width="6.500" height="6.500" rx="1.500" /><path d="m7.500 6.500 3-2v5.500l-3-2M2 1.500q3-1.300 6 0M2 12.700q3 1.300 6 0" /></svg>
        <Circle size={14} strokeWidth={2.500} className="mr-[6px] fill-white text-[#c95c3c]" />
        <svg viewBox="0 0 15 12" className="mr-[7px] h-3 w-[15px]" fill="none" stroke="currentColor"><path d="M5 4.500h8.500v5.500H4V7" /><path d="M6.500 6h3v2.500h-3z" fill="currentColor" /><path d="M1 2v2.500h3V2M2.500 4.500V7h2M1.500 1v1M3.500 1v1" strokeWidth="1.500" /></svg>
        <svg viewBox="0 0 15 14" className="mr-[9px] h-[14px] w-[15px]" fill="none" stroke="#222"><path d="m1 3 12.500-2v6M1 3v9.500h7M7 4.500q-3 0-3 3M5 6h5M4 9h4" /><circle cx="11.500" cy="10.800" r="3" fill="#2176c7" stroke="none" /></svg>
        <Wifi className="mr-[7px] size-3" />
        <Volume2 size={14} strokeWidth={1.600} className="mr-[8px]" />
        <Fit w={20} className="mr-[12px] text-[11px]">ENG</Fit>
        <div className="mr-[15px] flex flex-col items-center text-[10.500px] leading-[15px]"><Fit w={23}>10:49</Fit><Fit w={51}>08-05-2022</Fit></div>
        <Notifications count={1} className="mr-[10px] h-5 w-[22px]" />
        <span className="mr-[3px] h-full w-px bg-[#c9c9c9]" />
      </div>
    </div>
  );
}

function Button({ active, className = "", children }: { active?: boolean; className?: string; children: React.ReactNode }) {
  return (
    <span className={"-mt-[2px] flex size-6 items-center justify-center border " + (active ? "border-[#0b5ea8] bg-[#cfe5f8] " : "border-[#adadad] bg-[#e1e1e1] ") + className}>
      <svg viewBox="0 0 16 16" className="size-4" fill="#686868">{children}</svg>
    </span>
  );
}

function PlayerControls() {
  return (
    <div className="h-[52px] bg-[#f0f0f0] font-['Open_Sans',sans-serif] text-[11px] text-black">
      <div className="flex h-[19px] items-center">
        <Fit w={28} className="ml-[19px]">18:09</Fit>
        <div className="ml-[17px] h-[9px] w-[1235px] rounded-[3px] bg-linear-to-b from-[#b9b9b9] to-[#dcdcdc]"><div className="h-full w-20 rounded-[3px] bg-[#2b82d4]" /></div>
        <Fit w={42} className="ml-[18px]">-4:18:53</Fit>
      </div>
      <div className="flex h-[33px] items-center pl-1">
        <span className="-mt-[2px] flex size-[30px] items-center justify-center border border-[#adadad] bg-[#e1e1e1]">
          <svg viewBox="0 0 16 18" className="h-[18px] w-4" fill="#707070" stroke="#555"><path d="M1.500 1.500h4v15h-4zM9.500 1.500h4v15h-4z" /></svg>
        </span>
        <Button className="ml-[14px]"><path d="M1 3h2v10H1zM3 8l6-5v10zM9 8l6-5v10z" /></Button>
        <Button className="ml-[2px]"><path d="M3 3h10v10H3z" /></Button>
        <Button className="ml-[2px]"><path d="M1 3v10l6-5zM7 3v10l6-5zM13 3h2v10h-2z" /></Button>
        <Button className="ml-[14px]"><path d="M0 1h5v2.500H2.500V6H0zM11 1h5v5h-2.500V3.500H11zM0 10h2.500v2.500H5V15H0zM13.500 10H16v5h-5v-2.500h2.500z" /></Button>
        <Button className="ml-[2px]"><path d="M2 1h2v14H2zM7.200 1h2v14h-2zM12.500 1h2v14h-2zM.5 3h5v2.500h-5zM5.700 10h5v2.500h-5zM11 6h5v2.500h-5z" /></Button>
        <Button className="ml-[14px]"><path d="M0 1.500h14v2H0zM0 5.500h14v2H0zM0 9.500h9v2H0zM0 13h9v2H0zM11 9l4.500 3-4.500 3z" /></Button>
        <Button className="ml-[2px]"><path d="M1 7.500V4q0-1.500 1.500-1.500H11V0l4 3.500L11 7V4.500H3v3zM15 8.500V12q0 1.500-1.500 1.500H5V16l-4-3.500L5 9v2.500h8v-3z" /></Button>
        <Button active className="ml-[2px]"><path d="m1 2.500 2-1 4 4.500-1.500 1.500zM1 13 10.500 3.500 9 2h5.500v5.500L13 5.500 3 15zM9 8.500l4 4 1.500-1.500V15H9.500l2-1.500-4-3.500z" /></Button>
        <svg viewBox="0 0 14 12" className="mt-[15px] mr-[7px] ml-auto h-3 w-[14px]" fill="none"><path d="M0 3.500h2.500L6 .5v11l-3.500-3H0z" fill="#777" /><path d="M8 3q2 3 0 6M10 1.500q3.500 4.500 0 9" stroke="#ff941a" strokeWidth="1.500" /></svg>
        <div className="relative mr-[5px] h-6 w-[74px]">
          <svg viewBox="0 0 74 24" className="h-6 w-[74px]">
            <defs><linearGradient id="vol"><stop offset="0" stopColor="#8ccb8c" /><stop offset=".45" stopColor="#35cb35" /><stop offset=".75" stopColor="#1ace12" /><stop offset=".85" stopColor="#ffc814" /><stop offset="1" stopColor="#f22a16" /></linearGradient></defs>
            <path d="M1 21.500 72 2.500q1 0 1 1V23H1z" fill="url(#vol)" stroke="#707070" strokeWidth="1.300" />
          </svg>
          <Fit w={25} className="absolute top-[3px] left-[3px] text-[10px] text-[#666]">125%</Fit>
        </div>
      </div>
    </div>
  );
}

function OuterTaskbar() {
  const cell = "relative flex h-full w-[49px] shrink-0 items-center justify-center";
  return (
    <div className="flex h-10 items-center bg-linear-to-r from-[#d3e8eb] via-[#d1dde6] to-[#cde2e9] text-black">
      <span className="flex w-[48px] justify-center"><Windows className="size-4" /></span>
      <div className="flex h-full w-[344px] items-center border border-[#c5c9cb] bg-white pl-[11px]">
        <Search size={18} strokeWidth={1.500} className="-scale-x-100" />
        <Fit w={128} className="ml-[10px] pt-px text-[14px] text-[#333]">Type here to search</Fit>
        <Travel className="mr-[13px] ml-auto h-[32px] w-[50px]" />
      </div>
      <span className={cell}><Circle size={18} strokeWidth={2.800} className="mr-px" /></span>
      <span className={cell}><TaskView className="mr-1 size-4" /></span>
      <span className={cell}><Chrome badge className="mt-px ml-[2px] size-[27px]" /><i className="absolute bottom-0 h-[2px] w-10 bg-[#0078d7]" /></span>
      <span className={cell}><Folder className="size-6" /><i className="absolute bottom-0 h-[2px] w-10 border-r-8 border-[#68ace5] bg-[#0078d7]" /></span>
      <span className={cell}><Snip className="size-6" /></span>
      <span className={cell}><Store className="size-[23px]" /></span>
      <span className={cell}><ZoomApp className="size-6" /></span>
      <span className={cell}><StickyNote className="size-6" /></span>
      <span className={cell}><Recorder className="size-[23px]" /></span>
      <span className={cell + " border-b-2 border-[#0078d7] bg-[#edf4f7]"}><Cone className="h-6 w-[22px]" /></span>
      <div className="ml-auto flex h-full items-center">
        <ChevronUp size={18} strokeWidth={1.500} className="mr-[7px]" />
        <span className="mr-[10px] flex size-4 items-center justify-center bg-[#1f69c1] text-white"><Plus size={13} /></span>
        <Wifi className="mr-[10px] size-[14px]" />
        <div className="mr-[13px] flex flex-col items-center text-[12px] leading-[17px]"><Fit w={23}>ENG</Fit><Fit w={12}>IN</Fit></div>
        <div className="mr-[17px] flex flex-col items-center text-[12px] leading-[17px]"><Fit w={27}>12:18</Fit><Fit w={58}>25-06-2022</Fit></div>
        <Notifications count={2} className="mt-1 mr-[11px] h-6 w-[26px]" />
        <span className="mr-1 h-full w-px bg-[#aab8bf]" />
      </div>
    </div>
  );
}

export default function App() {
  return (
    <div className="flex h-[768px] w-[1366px] flex-col overflow-hidden bg-white font-['Open_Sans',sans-serif] leading-none">
      <Header />
      <main className="h-[632px] shrink-0 bg-black px-[83px]">
        <div className="flex"><SharedScreen /><LiveChat /></div>
        <InnerTaskbar />
      </main>
      <PlayerControls />
      <OuterTaskbar />
    </div>
  );
}
